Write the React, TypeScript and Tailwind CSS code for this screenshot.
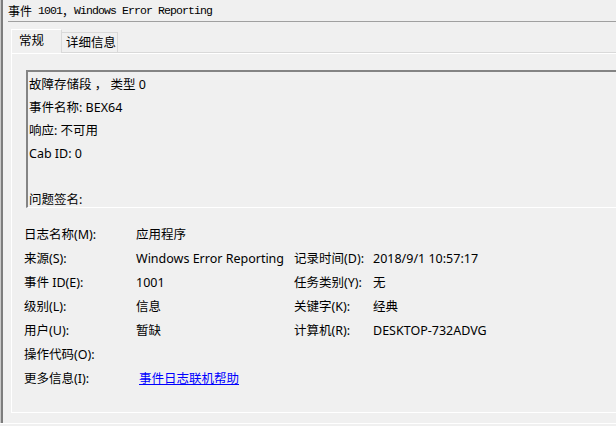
import React from "react";

const sans = { fontFamily: '"Noto Sans", "Noto Sans CJK SC", sans-serif' };

function Row({ l1, v1, l2, v2, link }: { l1: string; v1?: string; l2?: string; v2?: string; link?: boolean }) {
  return (
    <>
      <div className="h-[24px] flex items-center whitespace-nowrap">{l1}</div>
      <div className="h-[24px] flex items-center whitespace-nowrap">
        {link ? (
          <span className="ml-[3px] text-[#0000ff] underline">{v1}</span>
        ) : (
          v1
        )}
      </div>
      <div className="h-[24px] flex items-center whitespace-nowrap">{l2}</div>
      <div className="h-[24px] flex items-center whitespace-nowrap">{v2}</div>
    </>
  );
}

export default function App() {
  return (
    <div className="w-[616px] h-[426px] bg-[#f0f0f0] flex flex-col overflow-hidden text-black" style={sans}>
      <div className="h-[423px] flex shrink-0">
        <div className="w-[1px] shrink-0 bg-[#c8c8c8]" />
        <div className="w-[2px] shrink-0 bg-[#7c7c7c]" />
        <div className="flex-1 flex flex-col min-w-0">
          {/* title */}
          <div className="h-[21px] flex items-center pl-[5px] pt-[1px] whitespace-nowrap text-black">
            <span className="text-[12px]" style={{ fontFamily: '"Noto Sans CJK SC", sans-serif' }}>事件</span>
            <span className="text-[11.5px] tracking-[-0.9px]" style={{ fontFamily: '"Liberation Mono", monospace' }}>&nbsp;1001</span>
            <span className="text-[12px]" style={{ fontFamily: '"Noto Sans CJK SC", sans-serif' }}>，</span>
            <span className="text-[11.5px] tracking-[-0.9px]" style={{ fontFamily: '"Liberation Mono", monospace' }}>Windows Error Reporting</span>
          </div>
          <div className="h-[1px] bg-[#a0a0a0] ml-[5px]" />
          {/* tabs */}
          <div className="mt-[7px] ml-[8px] h-[23px] flex items-end text-[12.5px]">
            <div className="w-[51px] border-l border-t border-white border-r border-r-[#d9d9d9] flex items-center pl-[7px] bg-[#f0f0f0] relative z-10 -mb-[1px] h-[24px]">
              常规
            </div>
            <div className="w-[56px] h-[20px] border-t border-r border-[#d9d9d9] flex items-center pl-[4px] pt-[1px]">
              详细信息
            </div>
          </div>
          {/* panel */}
          <div className="ml-[8px] w-[612px] h-[361px] border-t border-[#d9d9d9]">
            <div className="h-full border-l border-t border-b border-white flex flex-col text-[12.5px]">
              <div className="ml-[14px] mt-[16px] h-[138px] border-t-2 border-l-2 border-t-[#848484] border-l-[#848484] border-b border-b-white overflow-hidden">
                <div className="pl-[1px] pt-[1px] leading-[23px] whitespace-nowrap">
                  <div className="h-[23px]">故障存储段 ， 类型 0</div>
                  <div className="h-[23px]">事件名称: BEX64</div>
                  <div className="h-[23px]">响应: 不可用</div>
                  <div className="h-[23px]">Cab ID: 0</div>
                  <div className="h-[23px]" />
                  <div className="h-[23px]">问题签名:</div>
                </div>
              </div>
              <div className="ml-[12px] mt-[15px] grid grid-cols-[112px_158px_79px_1fr]">
                <Row l1="日志名称(M):" v1="应用程序" />
                <Row l1="来源(S):" v1="Windows Error Reporting" l2="记录时间(D):" v2="2018/9/1 10:57:17" />
                <Row l1="事件 ID(E):" v1="1001" l2="任务类别(Y):" v2="无" />
                <Row l1="级别(L):" v1="信息" l2="关键字(K):" v2="经典" />
                <Row l1="用户(U):" v1="暂缺" l2="计算机(R):" v2="DESKTOP-732ADVG" />
                <Row l1="操作代码(O):" />
                <Row l1="更多信息(I):" v1="事件日志联机帮助" link />
              </div>
            </div>
          </div>
        </div>
      </div>
      <div className="h-[1px] bg-white shrink-0" />
    </div>
  );
}
